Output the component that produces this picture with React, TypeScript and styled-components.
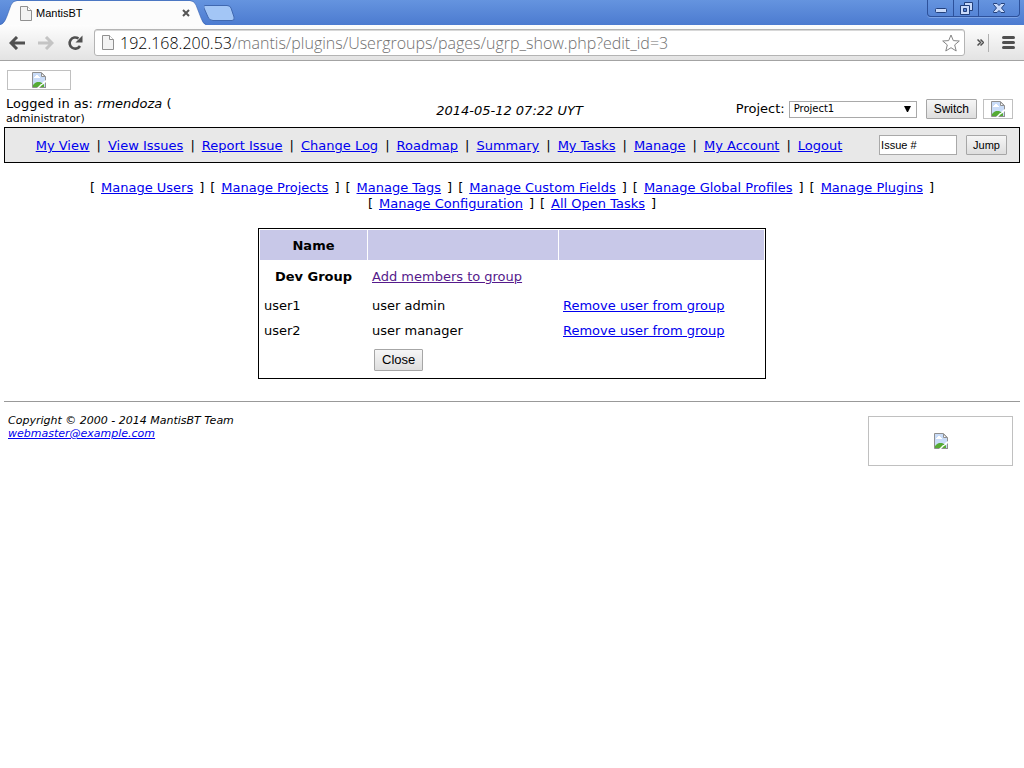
import React from "react";
import styled, { createGlobalStyle } from "styled-components";

const GlobalStyle = createGlobalStyle`
  *, *::before, *::after { box-sizing: border-box; }
  body {
    margin: 0;
    background: #fff;
    color: #000;
    font: 13px/16px Verdana, "DejaVu Sans", sans-serif;
  }
`;

/* ---------- browser window ---------- */

const TitleBar = styled.header`
  display: flex;
  height: 25px;
  background: linear-gradient(#6594df, #4c7bd0);
`;

const Tab = styled.div`
  position: relative;
  display: flex;
  align-items: center;
  gap: 4px;
  width: 204px;
  height: 25px;
  padding: 1px 14px 0 20px;
  font: 11px/14px Tahoma, "Liberation Sans", sans-serif;
`;

const TabShape = styled.svg`
  position: absolute;
  inset: 0;
`;

const TabTitle = styled.span`
  position: relative;
  flex: 1;
`;

const TabIcon = styled.svg`
  position: relative;
  flex: none;
`;

const BareButton = styled.button`
  position: relative;
  display: flex;
  flex: none;
  align-items: center;
  justify-content: center;
  padding: 0;
  border: 0;
  background: none;
`;

const NewTabButton = styled(BareButton)`
  height: 25px;
`;

const WindowControls = styled.div`
  display: flex;
  height: 17px;
  margin-left: auto;
  margin-right: 4px;
  border: 1px solid #2d519b;
  border-top: 0;
  border-radius: 0 0 4px 4px;
  box-shadow: 0 1px 0 #7ba3e6;
`;

const WindowButton = styled(BareButton)<{ $wide?: boolean; $low?: boolean }>`
  width: ${(p) => (p.$wide ? 41 : 25)}px;
  padding-top: ${(p) => (p.$low ? 4 : 0)}px;
  border-left: 1px solid #2d519b;
  &:first-child { border-left: 0; }
`;

const Toolbar = styled.div`
  display: flex;
  align-items: center;
  height: 36px;
  padding: 0 9px;
  border-bottom: 1px solid #a3a3a3;
  background: linear-gradient(#fdfdfd, #e3e3e3);
`;

const NavButtons = styled.div`
  display: flex;
  align-items: center;
  gap: 13px;
  margin-right: 11px;
`;

const AddressBar = styled.div`
  display: flex;
  flex: 1;
  align-items: center;
  gap: 6px;
  height: 27px;
  padding: 0 4px 0 7px;
  border: 1px solid #b4b4b4;
  border-radius: 3px;
  background: #fff;
  box-shadow: inset 0 1px 0 #d8d8d8;
`;

const Url = styled.div`
  flex: 1;
  color: #707070;
  font: 300 16px/20px "Open Sans", "Noto Sans", sans-serif;
  white-space: nowrap;
  overflow: hidden;
`;

const UrlHost = styled.span`
  color: #000;
`;

const ToolbarEnd = styled.div`
  display: flex;
  align-items: center;
  gap: 4px;
  margin-left: 12px;
`;

const Divider = styled.span`
  width: 1px;
  height: 18px;
  margin-right: 9px;
  background: #b0b0b0;
`;

/* ---------- page ---------- */

const Page = styled.main`
  padding: 9px 4px 0;
`;

const MissingImage = styled.div<{ $w: number; $h: number }>`
  display: flex;
  flex: none;
  align-items: center;
  justify-content: center;
  width: ${(p) => p.$w}px;
  height: ${(p) => p.$h}px;
  border: 1px solid #c0c0c0;
`;

const LogoRow = styled.div`
  padding-left: 3px;
`;

const InfoRow = styled.div`
  display: grid;
  grid-template-columns: 1fr auto 1fr;
  align-items: center;
  height: 37px;
  padding: 0 7px 0 2px;
`;

const Login = styled.div`
  padding-top: 6px;
  line-height: 14px;
`;

const Timestamp = styled.em`
  padding-top: 4px;
`;

const Small = styled.small`
  font-size: 11px;
`;

const ProjectForm = styled.form`
  display: flex;
  align-items: center;
  justify-content: flex-end;
  padding-top: 1px;
  label { margin-right: 4px; }
`;

const ProjectSelect = styled.select`
  appearance: none;
  width: 128px;
  height: 17px;
  margin-right: 9px;
  padding: 0 4px;
  border: 1px solid #a9a9a9;
  border-radius: 0;
  color: #000;
  background: #fff url("data:image/svg+xml,%3Csvg xmlns='http://www.w3.org/2000/svg' width='7' height='6'%3E%3Cpath d='M0 0h7L4 6H3z'/%3E%3C/svg%3E") no-repeat right 5px center;
  font: 10px/14px Verdana, "DejaVu Sans", sans-serif;
`;

const Button = styled.button<{ $size?: number }>`
  height: ${(p) => (p.$size === 13 ? 22 : 20)}px;
  padding: 0 ${(p) => (p.$size === 11 ? 6 : 7)}px;
  border: 1px solid #a6a6a6;
  border-radius: 1px;
  color: #000;
  background: linear-gradient(#f6f6f6, #dedede);
  font: ${(p) => p.$size ?? 12}px/16px Arial, "Liberation Sans", sans-serif;
`;

const RssSlot = styled.span`
  margin-left: 6px;
`;

const MenuBar = styled.div`
  display: flex;
  align-items: center;
  height: 36px;
  padding-right: 12px;
  border: 1px solid #000;
  background: #e8e8e8;
`;

const MenuLinks = styled.nav`
  display: flex;
  flex: 1;
  flex-wrap: wrap;
  justify-content: center;
  gap: 0 7px;
  padding: 2px 6px 0 0;
`;

const JumpForm = styled.form`
  display: flex;
  gap: 9px;
  align-items: center;
`;

const IssueInput = styled.input`
  width: 78px;
  height: 20px;
  padding: 0 1px;
  border: 1px solid #a9a9a9;
  color: #000;
  font: 11px/16px Arial, "Liberation Sans", sans-serif;
`;

const Link = styled.a<{ $visited?: boolean }>`
  color: ${(p) => (p.$visited ? "#551a8b" : "#0000ee")};
`;

const ManageLinks = styled.nav`
  display: flex;
  flex-wrap: wrap;
  justify-content: center;
  gap: 0 6px;
  padding: 17px 80px 16px;
`;

const Bracketed = styled.span`
  display: flex;
  gap: 6px;
  white-space: nowrap;
`;

const GroupTable = styled.table`
  width: 50%;
  margin: 0 auto;
  border: 1px solid #000;
  border-collapse: separate;
  border-spacing: 1px;
  table-layout: fixed;
`;

const HeadCell = styled.th<{ $width?: string }>`
  width: ${(p) => p.$width ?? "auto"};
  height: 30px;
  padding: 2px 4px 0;
  background: #c8c8e8;
`;

const Cell = styled.td<{ $h?: number }>`
  height: ${(p) => p.$h ?? 24}px;
  padding: 0 4px;
`;

const GroupName = styled.th`
  padding: 0 4px;
`;

const CloseCell = styled(Cell)`
  padding: 0 6px 2px;
`;

const Footer = styled.footer`
  display: flex;
  justify-content: space-between;
  align-items: flex-start;
  margin-top: 22px;
  padding: 12px 7px 0 4px;
  border-top: 1px solid #999;
`;

const FooterLogo = styled.div`
  padding-top: 2px;
`;

const Address = styled.address`
  font-size: 11px;
  line-height: 13px;
`;

const PageIcon = ({ size }: { size: number }) => (
  <TabIcon width={size - 3} height={size} viewBox="0 0 12 15" aria-hidden="true">
    <path d="M.5.5h7l4 4v10H.5z" fill="#f3f3f3" stroke="#909090" />
    <path d="M7.5.5v4h4" fill="#fff" stroke="#909090" />
  </TabIcon>
);

const BrokenIcon = () => (
  <svg width="14" height="16" viewBox="0 0 14 16" aria-hidden="true">
    <path d="M.5.5h9l4 4v11H.5z" fill="#c9dcf8" stroke="#909090" />
    <path d="M2 6V5h1V4h1V3h2v1h1v1h1v1z" fill="#fff" />
    <path d="M1 15v-2l2-2 2-1h3l2 1 2 1v3z" fill="#56ab35" />
    <path d="M9.5 1v3.5H13z" fill="#fff" stroke="#909090" />
    <path d="M5 16l4-4h1l1-2 3-2v2l-2 2-2 1-3 3z" fill="#fff" />
    <path d="M12 16l2-3v3z" fill="#909090" />
  </svg>
);

const menu = [
  "My View", "View Issues", "Report Issue", "Change Log", "Roadmap",
  "Summary", "My Tasks", "Manage", "My Account", "Logout",
];

const manage = [
  "Manage Users", "Manage Projects", "Manage Tags", "Manage Custom Fields",
  "Manage Global Profiles", "Manage Plugins", "Manage Configuration", "All Open Tasks",
];

const users = [
  { login: "user1", name: "user admin" },
  { login: "user2", name: "user manager" },
];

export default function App() {
  return (
    <>
      <GlobalStyle />
      <TitleBar>
        <Tab>
          <TabShape width="206" height="25" viewBox="0 0 206 25" aria-hidden="true">
            <path d="M0 25C4 24 5 21 7 16L11 5Q13 1 17 1H190Q194 1 196 5L201 18Q203 24 206 25z" fill="#fcfcfc" />
            <path d="M0 24.5C4 23 5 21 7 16L11 5Q13 .5 17 .5H190Q194 .5 196 5L201 18Q203 24 206 24.5" fill="none" stroke="#3a64b0" strokeOpacity=".6" />
          </TabShape>
          <PageIcon size={15} />
          <TabTitle>MantisBT</TabTitle>
          <BareButton aria-label="Close tab">
            <svg width="8" height="8" viewBox="0 0 8 8">
              <path d="M1 1l6 6M7 1L1 7" stroke="#555" strokeWidth="2" />
            </svg>
          </BareButton>
        </Tab>
        <NewTabButton aria-label="New tab">
          <svg width="32" height="25" viewBox="0 0 32 25">
            <path d="M1 5.500H23Q26 5.500 27 8L30 17Q31 20.500 28 20.500H9Q5 20.500 4 17L0 8Q-1 5.500 1 5.500z" fill="#a3c6f6" stroke="#4068b0" />
          </svg>
        </NewTabButton>
        <WindowControls>
          <WindowButton $low aria-label="Minimize">
            <svg width="12" height="5" viewBox="0 0 12 5">
              <rect x=".5" y=".5" width="11" height="4" rx="1" fill="#c9dafa" stroke="#22407c" />
            </svg>
          </WindowButton>
          <WindowButton aria-label="Restore">
            <svg width="13" height="13" viewBox="0 0 13 13">
              <path d="M4.500.5h8v8h-8z" fill="#c9dafa" stroke="#22407c" />
              <path d="M.5 3.500h9v9h-9z" fill="#c9dafa" stroke="#22407c" />
              <path d="M3.500 6.500h3v3h-3z" fill="#5683d4" stroke="#22407c" />
            </svg>
          </WindowButton>
          <WindowButton $wide aria-label="Close">
            <svg width="12" height="10" viewBox="0 0 12 10">
              <path d="M.5.5h3.500l2 2 2-2h3.500v1L8.500 5l3 3.500v1H8l-2-2-2 2H.5v-1l3-3.500-3-3.500z" fill="#c9dafa" stroke="#22407c" />
            </svg>
          </WindowButton>
        </WindowControls>
      </TitleBar>
      <Toolbar>
        <NavButtons>
          <BareButton aria-label="Back">
            <svg width="16" height="14" viewBox="0 0 16 14" fill="none" stroke="#505050" strokeWidth="3">
              <path d="M2 7h14M8 1L2 7l6 6" />
            </svg>
          </BareButton>
          <BareButton aria-label="Forward">
            <svg width="16" height="14" viewBox="0 0 16 14" fill="none" stroke="#c4c4c4" strokeWidth="3">
              <path d="M0 7h14M8 1l6 6-6 6" />
            </svg>
          </BareButton>
          <BareButton aria-label="Reload">
            <svg width="16" height="16" viewBox="0 0 16 16">
              <path d="M13 11A5.600 5.600 0 1 1 11.500 3.500" fill="none" stroke="#505050" strokeWidth="2.600" />
              <path d="M15.500.5v7h-7z" fill="#505050" />
            </svg>
          </BareButton>
        </NavButtons>
        <AddressBar>
          <PageIcon size={15} />
          <Url>
            <UrlHost>192.168.200.53</UrlHost>/mantis/plugins/Usergroups/pages/ugrp_show.php?edit_id=3
          </Url>
          <BareButton aria-label="Bookmark this page">
            <svg width="18" height="18" viewBox="0 0 18 18">
              <path d="M9 1l2.300 5.600 6 .4-4.600 3.900L14.200 17 9 13.700 3.800 17l1.500-6.100L.7 7l6-.4z" fill="#fff" stroke="#858585" />
            </svg>
          </BareButton>
        </AddressBar>
        <ToolbarEnd>
          <BareButton aria-label="More extensions">
            <svg width="7" height="7" viewBox="0 0 7 7" fill="none" stroke="#505050" strokeWidth="1.500">
              <path d="M.5.5l3 3-3 3M3.500.5l3 3-3 3" />
            </svg>
          </BareButton>
          <Divider />
          <BareButton aria-label="Menu">
            <svg width="13" height="13" viewBox="0 0 13 13">
              <path d="M1.500 1.500h10M1.500 6.500h10M1.500 11.500h10" stroke="#505050" strokeWidth="3" strokeLinecap="round" />
            </svg>
          </BareButton>
        </ToolbarEnd>
      </Toolbar>

      <Page>
        <LogoRow>
          <MissingImage $w={64} $h={20}><BrokenIcon /></MissingImage>
        </LogoRow>
        <InfoRow>
          <Login>
            Logged in as: <em>rmendoza</em> (<br />
            <Small>administrator)</Small>
          </Login>
          <Timestamp>2014-05-12 07:22 UYT</Timestamp>
          <ProjectForm>
            <label htmlFor="project">Project:</label>
            <ProjectSelect id="project">
              <option>Project1</option>
            </ProjectSelect>
            <Button type="button">Switch</Button>
            <RssSlot><MissingImage $w={30} $h={20}><BrokenIcon /></MissingImage></RssSlot>
          </ProjectForm>
        </InfoRow>
        <MenuBar>
          <MenuLinks>
            {menu.map((item, i) => (
              <React.Fragment key={item}>
                {i > 0 && <span>|</span>}
                <Link href="#">{item}</Link>
              </React.Fragment>
            ))}
          </MenuLinks>
          <JumpForm>
            <IssueInput aria-label="Issue number" defaultValue="Issue #" />
            <Button type="button" $size={11}>Jump</Button>
          </JumpForm>
        </MenuBar>
        <ManageLinks>
          {manage.map((item) => (
            <Bracketed key={item}>
              <span>[</span>
              <Link href="#">{item}</Link>
              <span>]</span>
            </Bracketed>
          ))}
        </ManageLinks>
        <GroupTable>
          <thead>
            <tr>
              <HeadCell $width="107px">Name</HeadCell>
              <HeadCell $width="190px" />
              <HeadCell />
            </tr>
          </thead>
          <tbody>
            <tr>
              <GroupName>Dev Group</GroupName>
              <Cell $h={32}><Link href="#" $visited>Add members to group</Link></Cell>
              <Cell />
            </tr>
            {users.map((u) => (
              <tr key={u.login}>
                <Cell>{u.login}</Cell>
                <Cell>{u.name}</Cell>
                <Cell><Link href="#">Remove user from group</Link></Cell>
              </tr>
            ))}
            <tr>
              <Cell />
              <CloseCell $h={33}><Button type="button" $size={13}>Close</Button></CloseCell>
              <Cell />
            </tr>
          </tbody>
        </GroupTable>
        <Footer>
          <Address>
            Copyright © 2000 - 2014 MantisBT Team<br />
            <Link href="#">webmaster@example.com</Link>
          </Address>
          <FooterLogo>
            <MissingImage $w={145} $h={50}><BrokenIcon /></MissingImage>
          </FooterLogo>
        </Footer>
      </Page>
    </>
  );
}
